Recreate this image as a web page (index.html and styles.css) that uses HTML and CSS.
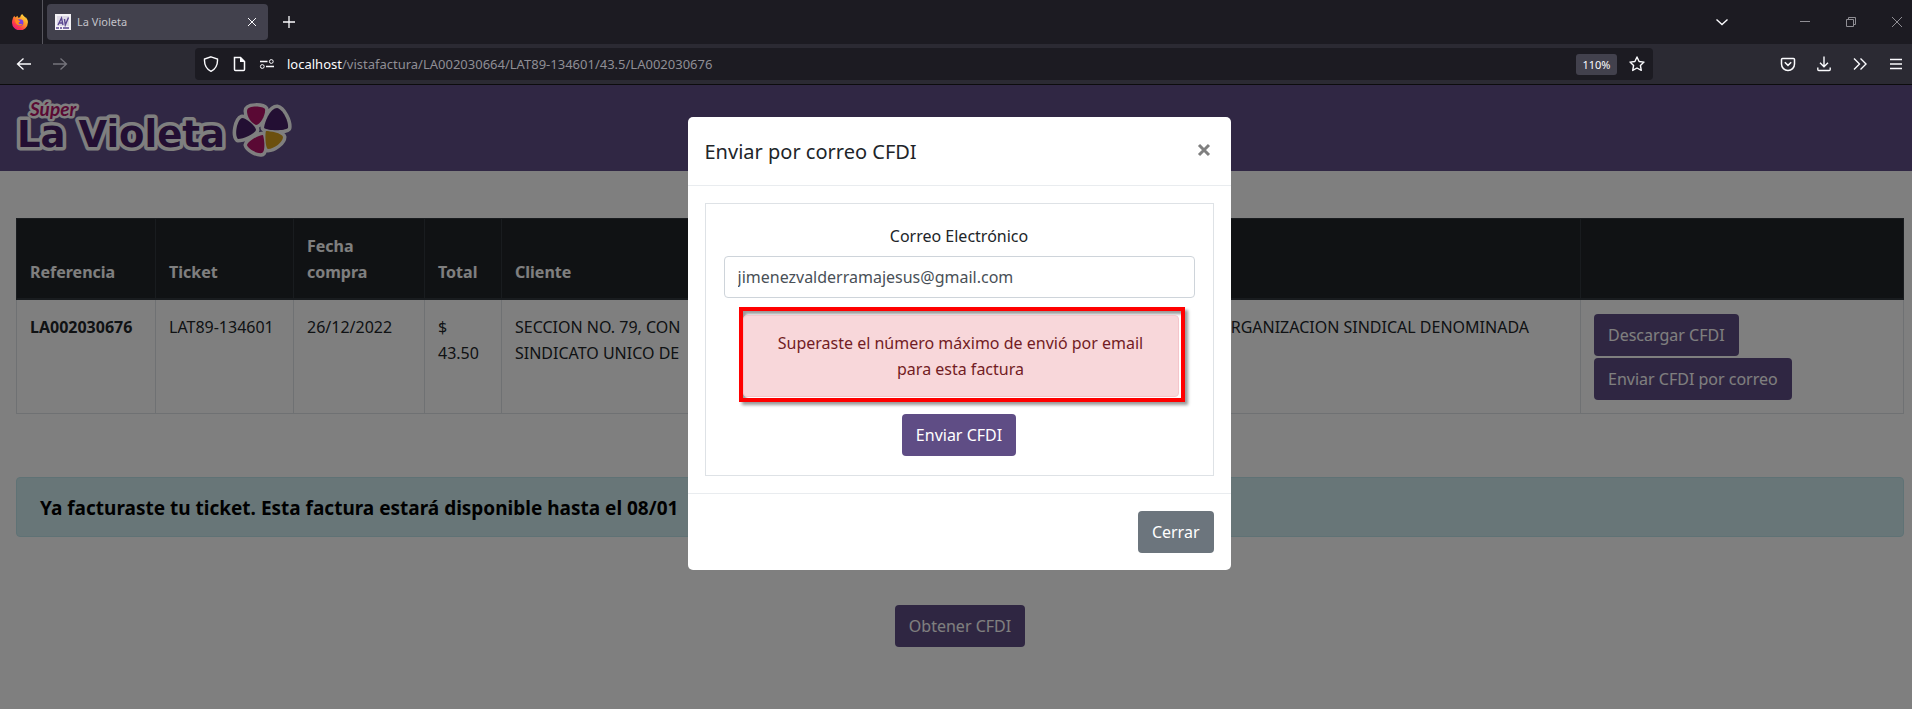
FILE: index.html
```
<!DOCTYPE html>
<html lang="es">
<head>
<meta charset="utf-8">
<title>La Violeta</title>
<link rel="stylesheet" href="styles.css">
</head>
<body>
<div class="browser">
  <div class="tabbar">
    <div class="fx">
      <svg width="16" height="16" viewBox="0 0 16 16"><defs><linearGradient id="f1" x1="1" y1="0" x2=".2" y2="1"><stop offset="0" stop-color="#fff44f"/><stop offset=".45" stop-color="#ff9a26"/><stop offset=".75" stop-color="#ff3b48"/><stop offset="1" stop-color="#e31587"/></linearGradient></defs><path fill="url(#f1)" d="M15 4.900c-.4-.8-1.100-1.700-1.600-2 .3.7.5 1.200.6 1.600C12.900 2.500 11.200 2.100 10.200 0 8.900.7 8.300 2.200 8.200 3.200c-.7 0-1.300.2-1.800.5C5.600 3.300 5.600 2.300 5.800 1.700 4.900 2 4.100 2.700 3.600 3.300c-.5 0-.9-.5-1-1.500C1.500 2.600.8 4 .6 5.300.2 6.300 0 7.200 0 8.300a7.900 7.900 0 0 0 15.900.3c.2-1.300-.2-2.600-.9-3.700z"/><circle cx="8" cy="8.600" r="3.400" fill="#7a3fe0"/><path fill="#ff8a1f" d="M3 5.500c1.600-.5 3 .1 4.300 1.300 1 .2 1.200.7.300 1.200-1 .3-1.300 1.300-.3 1.900 1 .5 2-.3 3 .1-1 1.700-3.400 2-5 .8C3.700 9.700 3 7.500 3 5.500z"/></svg>
    </div>
    <div class="tab">
      <svg width="16" height="16" viewBox="0 0 16 16"><path fill="#f4f2f6" d="M0 0h16v16H0z"/><path fill="#cfc9dc" d="M2 2h12v10H2z" opacity=".6"/><path d="M3 11 6.500 4l1.500 7M4.500 9h3M9.500 5l.8 6L13.500 3.500" fill="none" stroke="#5a4790" stroke-width="1.400"/><path d="M1 14h3m1 0h2m1 0h6" stroke="#5a4790" stroke-width="1.300"/></svg>
      <span class="tab-name">La Violeta</span>
      <button class="ic" aria-label="Cerrar pestaña"><svg width="16" height="16" viewBox="0 0 16 16"><path d="m4 4 8 8m0-8-8 8"/></svg></button>
    </div>
    <button class="ic" aria-label="Nueva pestaña"><svg width="16" height="16" viewBox="0 0 16 16"><path d="M8 2v12M2 8h12" stroke-width="1.300"/></svg></button>
    <div class="window-tools">
      <button class="ic" aria-label="Lista de pestañas"><svg width="16" height="16" viewBox="0 0 16 16"><path d="m2.500 5.500 5.500 5 5.500-5" stroke-width="1.400"/></svg></button>
      <div class="window-controls">
        <button class="ic" aria-label="Minimizar"><svg width="16" height="16" viewBox="0 0 16 16"><path d="M3 7.500h10"/></svg></button>
        <button class="ic" aria-label="Restaurar"><svg width="16" height="16" viewBox="0 0 16 16"><path d="M3.500 5.500h7v7h-7zM5.500 5.500v-2h7v7h-2"/></svg></button>
        <button class="ic" aria-label="Cerrar ventana"><svg width="16" height="16" viewBox="0 0 16 16"><path d="m3 3 10 10m0-10L3 13"/></svg></button>
      </div>
    </div>
  </div>
  <div class="toolbar">
    <div class="nav">
      <button class="ic" aria-label="Atrás"><svg width="16" height="16" viewBox="0 0 16 16"><path d="M15 8H1.500M7.500 2.500 1.500 8l6 5.500" stroke-width="1.300"/></svg></button>
      <button class="ic off" aria-label="Adelante"><svg width="16" height="16" viewBox="0 0 16 16"><path d="M1 8h13.500m-6-5.500 6 5.500-6 5.500" stroke-width="1.300"/></svg></button>
    </div>
    <div class="urlbar">
      <svg class="i" width="16" height="16" viewBox="0 0 16 16"><path d="M8 .8 14.500 3c.3 5-1.200 9.500-6.500 12.300C2.700 12.500 1.200 8 1.500 3z" stroke-width="1.400"/></svg>
      <svg class="i" width="16" height="16" viewBox="0 0 16 16"><path d="M3.500 1.500h6l4 4v8q0 1-1 1h-8q-1 0-1-1z" stroke-width="1.500"/><path d="M9 1v5h5z" fill="#fbfbfe" stroke="none"/></svg>
      <svg class="i" width="16" height="16" viewBox="0 0 16 16"><path d="M1 5.500h7.500M7 10.500h8" stroke-width="1.500"/><circle cx="12.300" cy="5.500" r="1.900"/><circle cx="3.300" cy="10.500" r="1.900"/></svg>
      <span class="url"><b>localhost</b>/vistafactura/LA002030664/LAT89-134601/43.5/LA002030676</span>
      <button class="zoom">110%</button>
      <button class="ic" aria-label="Marcador"><svg width="16" height="16" viewBox="0 0 16 16"><path d="m8 1 2.100 4.500 4.900.6-3.600 3.400.9 4.900L8 12l-4.300 2.400.9-4.900L1 6.100l4.900-.6z" stroke-width="1.400" stroke-linejoin="round"/></svg></button>
    </div>
    <div class="actions">
      <button class="ic" aria-label="Pocket"><svg width="16" height="16" viewBox="0 0 16 16"><path d="M2.500 2.500h11q1 0 1 1V8a6.500 6.500 0 0 1-13 0V3.500q0-1 1-1zM4.800 6.300 8 9.400l3.200-3.100" stroke-width="1.500"/></svg></button>
      <button class="ic" aria-label="Descargas"><svg width="16" height="16" viewBox="0 0 16 16"><path d="M8 .5v10M4 6.700l4 4 4-4M1.800 11.500v2q0 1 1 1h10.400q1 0 1-1v-2" stroke-width="1.400"/></svg></button>
      <button class="ic" aria-label="Más herramientas"><svg width="16" height="16" viewBox="0 0 16 16"><path d="m2 2.500 5.500 5.500L2 13.500m6.500-11L14 8l-5.500 5.500" stroke-width="1.400"/></svg></button>
      <button class="ic" aria-label="Menú"><svg width="16" height="16" viewBox="0 0 16 16"><path d="M2 3.500h12M2 8h12M2 12.500h12" stroke-width="1.300"/></svg></button>
    </div>
  </div>

  <div class="page">
    <header class="brand">
      <svg width="280" height="64" viewBox="0 0 280 64" role="img" aria-label="Súper La Violeta">
        <defs><g id="petals">
          <path fill="#b51368" d="M231 15c0-6 16-5 18-2 1 5-4 15-9 16-5-2-9-8-9-14z"/>
          <path fill="#471f66" d="M248 32c1-8 7-20 13-20 6 1 12 14 11 20-3 3-20 3-24 0z"/>
          <path fill="#471f66" d="M226 22c4 0 14 8 14 12-1 4-13 9-18 9-4-4-1-19 4-21z"/>
          <path fill="#d9a01c" d="M250 35c4 0 16 2 17 6 0 5-9 12-15 12-3-1-3-16-2-18z"/>
          <path fill="#b51368" d="M247 39c1 3 3 16-1 18-5 1-14-4-15-8 1-4 12-10 16-10z"/>
        </g></defs>
        <text class="logo-main" x="1" y="51">La Violeta</text>
        <g class="petal-halo"><path d="M231 15c0-6 16-5 18-2 1 5-4 15-9 16-5-2-9-8-9-14zM248 32c1-8 7-20 13-20 6 1 12 14 11 20-3 3-20 3-24 0zM226 22c4 0 14 8 14 12-1 4-13 9-18 9-4-4-1-19 4-21zM250 35c4 0 16 2 17 6 0 5-9 12-15 12-3-1-3-16-2-18zM247 39c1 3 3 16-1 18-5 1-14-4-15-8 1-4 12-10 16-10z"/></g>
        <use href="#petals"/>
        <text class="logo-top" x="14" y="20">Súper</text>
      </svg>
    </header>
    <main class="content">
      <table class="grid">
        <colgroup><col class="c1"><col class="c2"><col class="c3"><col class="c4"><col><col class="c6"></colgroup>
        <thead><tr><th>Referencia</th><th>Ticket</th><th>Fecha compra</th><th>Total</th><th>Cliente</th><th></th></tr></thead>
        <tbody><tr>
          <th>LA002030676</th><td>LAT89-134601</td><td>26/12/2022</td><td>$ 43.50</td>
          <td><div class="client"><span>SECCION NO. 79, CON</span><span>ORGANIZACION SINDICAL DENOMINADA</span></div>SINDICATO UNICO DE</td>
          <td><div class="stack"><button class="btn">Descargar CFDI</button><button class="btn">Enviar CFDI por correo</button></div></td>
        </tr></tbody>
      </table>
      <div class="notice">Ya facturaste tu ticket. Esta factura estará disponible hasta el 08/01</div>
      <div class="center"><button class="btn">Obtener CFDI</button></div>
    </main>
    <div class="backdrop">
      <div class="modal" role="dialog" aria-labelledby="mt">
        <div class="modal-head"><h5 id="mt">Enviar por correo CFDI</h5><button class="close" aria-label="Cerrar"><svg width="14" height="14" viewBox="0 0 14 14"><path d="m2 2 10 10m0-10L2 12"/></svg></button></div>
        <div class="modal-body">
          <form class="card">
            <label for="mail">Correo Electrónico</label>
            <input id="mail" type="email" value="jimenezvalderramajesus@gmail.com">
            <div class="mark"><div class="error">Superaste el número máximo de envió por email para esta factura</div></div>
            <button class="btn" type="button">Enviar CFDI</button>
          </form>
        </div>
        <div class="modal-foot"><button class="btn gray">Cerrar</button></div>
      </div>
    </div>
  </div>
</div>
</body>
</html>
```
FILE: styles.css
```
* { box-sizing: border-box; }
body { margin: 0; font: 16px/26px "Noto Sans", "Open Sans", sans-serif; color: #212529; }
button, input { font: inherit; margin: 0; }
.browser { min-height: 100vh; display: flex; flex-direction: column; }

.ic { display: flex; padding: 0; border: 0; background: none; color: #fbfbfe; }
.ic svg, .i { fill: none; stroke: currentColor; flex: none; }
.i { color: #fbfbfe; }
.ic.off { color: #75747c; }

.tabbar { height: 44px; background: #1c1b22; display: flex; align-items: center; }
.fx { width: 43px; height: 44px; padding-left: 12px; display: flex; align-items: center; border-right: 1px solid #57565e; }
.tab { width: 221px; height: 36px; margin: 0 13px 0 4px; padding: 0 8px; border-radius: 4px; background: #42414d; display: flex; align-items: center; gap: 6px; }
.tab-name { flex: 1; font-size: 11px; color: #c4c3ca; }
.window-tools { margin-left: auto; padding-right: 7px; display: flex; gap: 67px; }
.window-controls { display: flex; gap: 30px; }
.window-controls .ic { color: #8f8e94; }

.toolbar { height: 41px; background: #2b2a33; border-bottom: 1px solid #0c0c0d; display: flex; align-items: center; }
.nav { width: 195px; padding-left: 16px; display: flex; gap: 20px; }
.urlbar { flex: 1; height: 32px; padding: 0 8px; border-radius: 4px; background: #1c1b22; display: flex; align-items: center; gap: 12px; }
.url { flex: 1; font-size: 13px; color: #8f8e95; white-space: nowrap; }
.url b { font-weight: 400; color: #fbfbfe; }
.zoom { width: 41px; height: 21px; padding: 0; border: 0; border-radius: 3px; background: #42414d; color: #fbfbfe; font-size: 11px; line-height: 21px; }
.actions { width: 259px; padding-right: 8px; display: flex; justify-content: flex-end; gap: 20px; }

.page { flex: 1; position: relative; background: #fff; }
.brand { height: 86px; padding: 11px 16px; background: #604f88; }
.brand svg { display: block; overflow: visible; }
.logo-main, .logo-top { stroke: #fff; stroke-linejoin: round; paint-order: stroke; }
.logo-main { font: 700 37px "DejaVu Sans", sans-serif; fill: #471f66; stroke-width: 7px; }
.logo-top { font: italic 700 19px Lato, sans-serif; fill: #b51368; stroke-width: 5px; }
.petal-halo { fill: #fff; stroke: #fff; stroke-width: 7px; stroke-linejoin: round; }

.content { padding: 47px 8px 0 16px; }
.grid { width: 100%; table-layout: fixed; border-collapse: collapse; }
.grid th, .grid td { padding: 14px 13px 13px; border: 1px solid #dee2e6; text-align: left; vertical-align: top; }
.grid thead th { background: #212529; border-color: #32383e; color: #fff; vertical-align: bottom; border-bottom-width: 2px; }
.c1 { width: 139px; }
.c2 { width: 138px; }
.c3 { width: 131px; }
.c4 { width: 77px; }
.c6 { width: 323px; }
.client { display: flex; justify-content: space-between; padding-right: 38px; }
.stack { display: flex; flex-direction: column; align-items: flex-start; gap: 2px; }
.btn { padding: 7px 14px; border: 0 solid; border-radius: 4px; background: #5f4d85; color: #fff; line-height: 28px; }
.btn.gray { background: #6c757d; }
.notice { margin-top: 63px; padding: 15px 23px 13px; border: 1px solid #bee5eb; border-radius: 4px; background: #d1ecf1; color: #000; font-size: 19px; font-weight: 700; line-height: 30px; }
.center { margin-top: 68px; text-align: center; }

.backdrop { position: absolute; inset: 0; padding: 32px 0 0 6px; background: rgba(0, 0, 0, .5); }
.modal { width: 543px; margin: 0 auto; border-radius: 5px; background: #fff; }
.modal-head { padding: 18px 20px 16px 17px; display: flex; justify-content: space-between; border-bottom: 1px solid #e9ecef; }
.modal-head h5 { margin: 0; font-size: 20px; font-weight: 400; line-height: 34px; }
.close { align-self: flex-start; display: flex; margin-top: 8px; padding: 0; border: 0; background: none; }
.close svg { stroke: #7f7f7f; stroke-width: 3px; }
.modal-body { padding: 17px; }
.card { border: 1px solid #dee2e6; padding: 19px 18px; display: flex; flex-direction: column; align-items: center; text-align: center; }
.card label { margin-bottom: 7px; }
.card input { width: 100%; height: 42px; padding: 0 13px; border: 1px solid #ced4da; border-radius: 4px; background: #fff; color: #495057; }
.mark { margin: 9px 10px 12px 15px; align-self: stretch; padding: 4px 2px 1px 0; border: 4px solid #f00; box-shadow: 3px 3px 3px rgba(0, 0, 0, .4), inset 3px 3px 3px rgba(0, 0, 0, .4); }
.error { padding: 14px 22px; border: 1px solid #f5c6cb; border-radius: 4px; background: #f8d7da; color: #721c24; }
.modal-foot { padding: 17px; border-top: 1px solid #e9ecef; display: flex; justify-content: flex-end; }
```
